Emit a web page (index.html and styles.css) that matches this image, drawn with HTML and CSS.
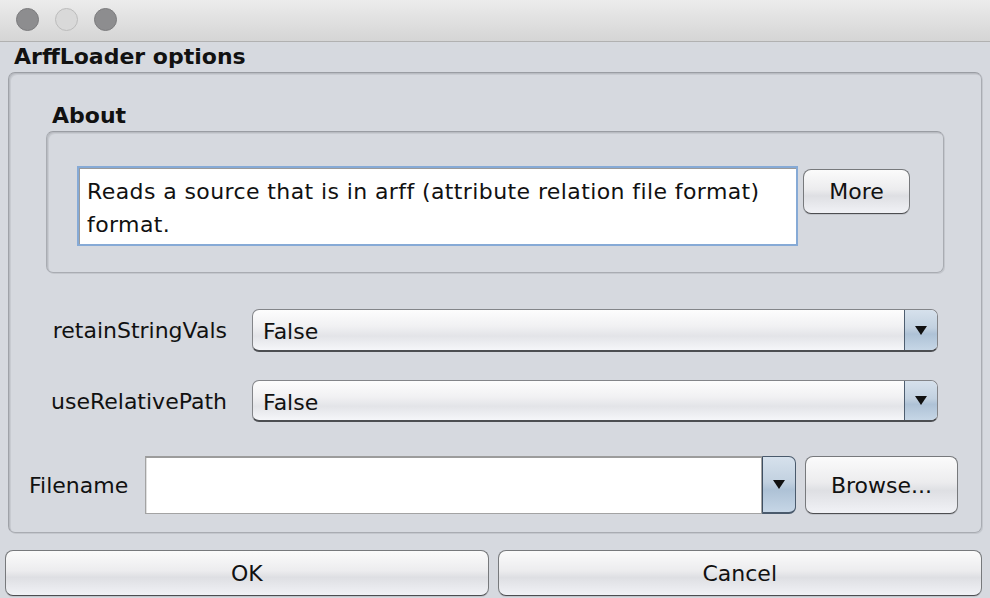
FILE: index.html
```html
<!DOCTYPE html>
<html>
<head>
<meta charset="utf-8">
<link rel="stylesheet" href="styles.css">
</head>
<body>
<div class="window">
  <div class="titlebar">
    <span class="light dark"></span>
    <span class="light pale"></span>
    <span class="light dark"></span>
  </div>
  <div class="content">
    <div class="heading">ArffLoader options</div>
    <div class="outer">
      <div class="about-title">About</div>
      <div class="about">
        <div class="textarea">Reads a source that is in arff (attribute relation file format) format.</div>
        <button class="btn more">More</button>
      </div>
      <div class="row row1">
        <div class="label">retainStringVals</div>
        <div class="combo"><span class="val">False</span><span class="arrow"><span class="tri"></span></span></div>
      </div>
      <div class="row row2">
        <div class="label">useRelativePath</div>
        <div class="combo"><span class="val">False</span><span class="arrow"><span class="tri"></span></span></div>
      </div>
      <div class="filerow">
        <div class="flabel">Filename</div>
        <div class="ecombo"><span class="field"></span><span class="earrow"><span class="tri"></span></span></div>
        <button class="btn browse">Browse...</button>
      </div>
    </div>
    <div class="buttons">
      <button class="btn big">OK</button>
      <button class="btn big">Cancel</button>
    </div>
  </div>
</div>
</body>
</html>
```

FILE: styles.css
```css
html, body {
  margin: 0;
  padding: 0;
}
body {
  width: 990px;
  height: 598px;
  overflow: hidden;
  background: #d6d9df;
  font-family: "DejaVu Sans", "Liberation Sans", sans-serif;
  color: #111;
}
.window {
  width: 990px;
  height: 598px;
  display: flex;
  flex-direction: column;
}
.titlebar {
  height: 41px;
  border-bottom: 1px solid #b1b1b1;
  background: linear-gradient(#ececec, #d5d5d5);
  display: flex;
  align-items: center;
  padding-left: 16px;
  gap: 16px;
  box-sizing: content-box;
}
.light {
  width: 23px;
  height: 23px;
  border-radius: 50%;
  box-sizing: border-box;
  margin-top: -2px;
}
.light.dark {
  background: #8d8d8f;
  border: 1px solid #7c7c7e;
}
.light.pale {
  background: #d9d9d9;
  border: 1px solid #bcbcbc;
}
.content {
  padding: 0 8px 0 5px;
  display: flex;
  flex-direction: column;
}
.heading {
  height: 30px;
  padding-left: 9px;
  font-weight: bold;
  font-size: 22px;
  line-height: 30px;
}
.outer {
  margin-left: 3px;
  width: 974px;
  height: 461px;
  box-sizing: border-box;
  border: 1px solid #a9acb2;
  border-top-color: #9a9da3;
  border-left-color: #9fa2a8;
  border-radius: 7px;
  box-shadow: inset 1px 1px 0 #b9bcc2, inset 2px 2px 0 #c8cbd1, 1px 1px 0 #c4c7cd;
  padding: 0 0 0 37px;
  display: flex;
  flex-direction: column;
}
.about-title {
  height: 58px;
  font-weight: bold;
  font-size: 22px;
  line-height: 20px;
  padding-top: 33px;
  padding-left: 6px;
  box-sizing: border-box;
}
.about {
  width: 898px;
  height: 142px;
  box-sizing: border-box;
  border: 1px solid #a9acb2;
  border-top-color: #9a9da3;
  border-radius: 7px;
  box-shadow: inset 1px 1px 0 #b9bcc2, inset 2px 2px 0 #c8cbd1, 1px 1px 0 #c4c7cd;
  display: flex;
  align-items: flex-start;
  padding: 34px 0 0 30px;
  gap: 5px;
}
.textarea {
  width: 721px;
  height: 80px;
  box-sizing: border-box;
  background: #fff;
  border: 2px solid #86aad6;
  box-shadow: inset 1px 1px 0 #9a9a9a;
  padding: 7px 8px 0 8px;
  font-size: 22px;
  line-height: 33px;
  letter-spacing: 0.4px;
  color: #111;
}
.btn {
  font-family: "DejaVu Sans", "Liberation Sans", sans-serif;
  font-size: 22px;
  color: #111;
  background: linear-gradient(#fbfbfb 0%, #ececee 45%, #dedfe3 60%, #f1f2f6 100%);
  border: 1px solid #77797c;
  border-bottom-color: #4d4e51;
  border-radius: 8px;
  box-shadow: 0 1px 0 #c2c5cb;
  padding: 0;
  margin: 0;
}
.more {
  width: 107px;
  height: 45px;
  margin-top: 3px;
}
.row {
  display: flex;
  align-items: center;
}
.row1 {
  margin-top: 36px;
  height: 43px;
}
.row2 {
  margin-top: 28px;
  height: 42px;
}
.label {
  width: 187px;
  text-align: right;
  font-size: 22px;
  padding-right: 2px;
  box-sizing: border-box;
  margin-left: -4px;
}
.combo {
  margin-left: 23px;
  width: 686px;
  height: 100%;
  box-sizing: border-box;
  border: 1px solid #838589;
  border-bottom: 2px solid #4c4e52;
  border-radius: 7px;
  background: linear-gradient(#fdfdfd 0%, #f1f1f3 40%, #e3e4e8 65%, #f5f6f9 100%);
  display: flex;
  overflow: hidden;
}
.val {
  flex: 1;
  font-size: 22px;
  line-height: 43px;
  padding-left: 10px;
}
.arrow, .earrow {
  width: 32px;
  border-left: 1px solid #4e5e70;
  background: linear-gradient(#d6e1ec 0%, #c2d1e0 45%, #aec2d6 60%, #c6d6e6 100%);
  display: flex;
  align-items: center;
  justify-content: center;
}
.tri {
  width: 0;
  height: 0;
  border-left: 6px solid transparent;
  border-right: 6px solid transparent;
  border-top: 9px solid #111;
}
.filerow {
  margin-top: 34px;
  height: 58px;
  display: flex;
  align-items: center;
  margin-left: -17px;
}
.flabel {
  width: 116px;
  font-size: 22px;
  box-sizing: border-box;
}
.ecombo {
  width: 651px;
  height: 58px;
  display: flex;
}
.field {
  flex: 1;
  background: #fff;
  border: 1px solid #a3a3a3;
  border-top: 2px solid #9c9c9c;
  box-shadow: inset 1px 0 0 #e0e0e0;
}
.earrow {
  width: 32px;
  border: 1px solid #4a5a6c;
  border-left: 1px solid #3e4f62;
  border-radius: 0 7px 7px 0;
  border-bottom-width: 2px;
}
.browse {
  margin-left: 9px;
  width: 153px;
  height: 58px;
}
.buttons {
  display: flex;
  gap: 9px;
  margin-top: 17px;
}
.big {
  height: 46px;
  width: 485px;
}
.big + .big {
  width: 486px;
}
```
